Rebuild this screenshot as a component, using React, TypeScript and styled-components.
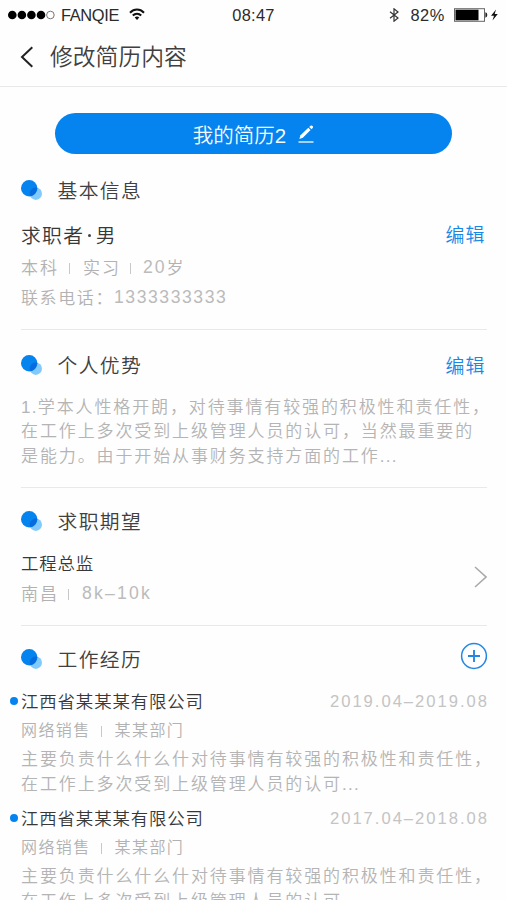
import React from 'react';
import styled, { createGlobalStyle } from 'styled-components';

const GlobalStyle = createGlobalStyle`
  * { box-sizing: border-box; }
  html, body { margin: 0; padding: 0; background: #fefefe; }
  body {
    height: 900px;
    overflow: hidden;
    font-family: "Liberation Sans", "Noto Sans CJK SC", sans-serif;
    font-weight: 350;
  }
`;

const Screen = styled.div`
  width: 507px;
  height: 900px;
  overflow: hidden;
  background: #fefefe;
`;

const StatusBar = styled.header`
  display: grid;
  grid-template-columns: 1fr auto 1fr;
  align-items: center;
  height: 30px;
  padding: 0 8px 0 8px;
  font-size: 16.4px;
  color: #2b2b2b;
`;

const StatusGroup = styled.div<{ $end?: boolean }>`
  display: flex;
  align-items: center;
  justify-content: ${(p) => (p.$end ? 'flex-end' : 'flex-start')};
`;

const Clock = styled.span`
  letter-spacing: 0.3px;
`;

const Percent = styled.span`
  letter-spacing: 0.6px;
`;

const SignalDots = styled.svg`
  width: 47px;
  height: 10px;
  margin-right: 6px;
`;

const Carrier = styled.span`
  letter-spacing: -0.35px;
`;

const Wifi = styled.svg`
  width: 16px;
  height: 13px;
  margin: 0 0 1px 10px;
`;

const Bluetooth = styled.svg`
  width: 10px;
  height: 14px;
  margin-right: 11px;
`;

const Battery = styled.svg`
  width: 45px;
  height: 14px;
  margin-left: 9px;
`;

const NavBar = styled.nav`
  display: flex;
  align-items: center;
  height: 57px;
  padding: 0 0 2px 20px;
  border-bottom: 1px solid #e9e9e9;
`;

const BackIcon = styled.svg`
  width: 14px;
  height: 22px;
  margin: 0 16px 0 0;
`;

const NavTitle = styled.h1`
  margin: 0;
  font-size: 22.8px;
  line-height: 32px;
  font-weight: 350;
  color: #404040;
`;

const ResumeButton = styled.button`
  display: flex;
  align-items: center;
  justify-content: center;
  width: 397px;
  height: 41px;
  margin: 26px 0 0 55px;
  padding: 0;
  border: 0;
  border-radius: 21px;
  background: #0583ee;
  color: #f4faff;
  font: inherit;
  font-size: 20.5px;
`;

const PenIcon = styled.svg`
  width: 16px;
  height: 18px;
  margin-left: 12px;
`;

const Section = styled.section<{ $top: number; $bottom: number }>`
  margin: 0 20px 0 21px;
  padding: ${(p) => p.$top}px 0 ${(p) => p.$bottom}px;
  border-bottom: 1px solid #e9e9e9;
`;

const SectionHead = styled.div`
  display: flex;
  align-items: center;
  height: 40px;
`;

const Mark = styled.svg`
  width: 21px;
  height: 20px;
  margin: 0 15.5px 2px 0;
`;

const SectionTitle = styled.h2`
  flex: 1;
  margin: 0;
  font-size: 19.8px;
  line-height: 28px;
  font-weight: 350;
  letter-spacing: 1.4px;
  color: #404040;
`;

const EditLink = styled.a`
  margin: 2px 1.8px 0 0;
  font-size: 18.9px;
  line-height: 28px;
  letter-spacing: 0.9px;
  color: #1987e6;
`;

const Row = styled.div<{ $height: number; $gap?: number }>`
  display: flex;
  align-items: center;
  justify-content: space-between;
  height: ${(p) => p.$height}px;
  margin-top: ${(p) => p.$gap ?? 0}px;
`;

const Name = styled.span<{ $size: number; $track: number }>`
  padding-bottom: 2px;
  font-size: ${(p) => p.$size}px;
  letter-spacing: ${(p) => p.$track}px;
  color: #383838;
`;

const Dot = styled.span`
  display: inline-block;
  width: 3px;
  height: 3px;
  margin: 0 5px 6px 3.5px;
  border-radius: 50%;
  background: #444;
`;

const Meta = styled.div<{ $size: number; $track: number }>`
  display: flex;
  align-items: center;
  padding-bottom: 2px;
  font-size: ${(p) => p.$size}px;
  letter-spacing: ${(p) => p.$track}px;
  color: #b2b2b2;
`;

const Digits = styled.span<{ $track: number }>`
  margin-top: 2px;
  font-size: 17.6px;
  letter-spacing: ${(p) => p.$track}px;
  color: #bbb;
`;

const Bar = styled.i<{ $before: number; $after: number }>`
  width: 1px;
  height: 11px;
  margin: 4px ${(p) => p.$after}px 0 ${(p) => p.$before}px;
  background: #c8c8c8;
`;

const Paragraph = styled.p<{ $gap: number }>`
  margin: ${(p) => p.$gap}px -10px 0 0;
  font-size: 17px;
  line-height: 24.4px;
  letter-spacing: 1.88px;
  white-space: nowrap;
  color: #b4b4b4;
`;

const Tight = styled.span`
  letter-spacing: 1.3px;
`;

const ChevronSpot = styled.div`
  display: flex;
  align-items: center;
  justify-content: space-between;
`;

const Chevron = styled.svg`
  width: 14px;
  height: 24px;
  margin-top: 3px;
`;

const AddIcon = styled.svg`
  width: 28px;
  height: 28px;
  margin: 0 -1px 8px 0;
`;

const Job = styled.article`
  display: flow-root;
  height: 117.2px;
`;

const Bullet = styled.i`
  flex: none;
  width: 8px;
  height: 8px;
  margin: 0 3px 0 -11px;
  border-radius: 50%;
  background: #0583ee;
`;

const Company = styled(Name)`
  flex: 1;
`;

const Period = styled.span`
  margin: 1px -2px 0 0;
  font-size: 16.6px;
  letter-spacing: 1.99px;
  color: #c4c4c4;
`;

function Heading({ title, children }: { title: string; children?: React.ReactNode }) {
  return (
    <SectionHead>
      <Mark viewBox="0 0 21 20">
        <circle cx="14.8" cy="13.7" r="6.2" fill="#82cafb" />
        <circle cx="8.2" cy="8.2" r="8.2" fill="#0583ee" />
        <path d="M8.7 12.7A6.2 6.2 0 0 1 15.9 7.6A8.2 8.2 0 0 1 9.8 16.3A6.2 6.2 0 0 1 8.7 12.7Z" fill="#056bdf" />
      </Mark>
      <SectionTitle>{title}</SectionTitle>
      {children}
    </SectionHead>
  );
}

const jobs = ['2019.04–2019.08', '2017.04–2018.08'];

export default function App() {
  return (
    <Screen>
      <GlobalStyle />
      <StatusBar>
        <StatusGroup>
          <SignalDots viewBox="0 0 47 10">
            {[4.3, 13.9, 23.4, 33].map((x) => (
              <circle key={x} cx={x} cy="5" r="4.3" fill="#000" />
            ))}
            <circle cx="42.4" cy="5" r="3.8" fill="none" stroke="#666" strokeWidth="0.9" />
          </SignalDots>
          <Carrier>FANQIE</Carrier>
          <Wifi viewBox="0 0 16 13" fill="none" stroke="#111" strokeWidth="2">
            <path d="M1 4.7C5 .5 11 .5 15 4.7" />
            <path d="M3.8 7.5C6.2 5 9.8 5 12.2 7.5" />
            <path d="M5.7 9.4Q8 7.5 10.3 9.4L8 12Z" fill="#111" stroke="none" />
          </Wifi>
        </StatusGroup>
        <Clock>08:47</Clock>
        <StatusGroup $end>
          <Bluetooth viewBox="0 0 10 14" fill="none" stroke="#333" strokeWidth="1.2">
            <path d="M1 3.8L9 10L5 13.2V.8L9 4L1 10.2" />
          </Bluetooth>
          <Percent>82%</Percent>
          <Battery viewBox="0 0 45 14">
            <rect x="0.5" y="0.7" width="30" height="12.6" fill="#fff" stroke="#666" />
            <rect x="1.5" y="1.7" width="23" height="10.6" fill="#000" />
            <path d="M31.4 4.3Q33.3 4.6 33.3 7T31.4 9.7Z" fill="#222" />
            <path d="M42 1.5L37 7.8H40L38.5 12.5L43.8 6H40.7Z" fill="#111" />
          </Battery>
        </StatusGroup>
      </StatusBar>
      <NavBar>
        <BackIcon viewBox="0 0 14 22">
          <path d="M12.3 1.3L2 11L12.3 20.7" fill="none" stroke="#222" strokeWidth="2" />
        </BackIcon>
        <NavTitle>修改简历内容</NavTitle>
      </NavBar>
      <ResumeButton>
        我的简历2
        <PenIcon viewBox="0 0 16 18">
          <path d="M0.5 17H15.5" stroke="#d8edff" strokeWidth="1.5" />
          <path d="M1.3 14L2.5 10.3L10.3 2.8L12.6 5.1L4.8 12.7Z" fill="#fff" />
          <path d="M11.2 1.9L12.5.7Q13.7 0 14.6 .9T14.7 3L13.5 4.2Z" fill="#fff" />
        </PenIcon>
      </ResumeButton>

      <Section $top={17} $bottom={18}>
        <Heading title="基本信息" />
        <Row $height={32} $gap={8}>
          <Name $size={19.8} $track={1.3}>求职者<Dot />男</Name>
          <EditLink>编辑</EditLink>
        </Row>
        <Row $height={32}>
          <Meta $size={17} $track={2}>
            本科<Bar $before={10} $after={13} />实习<Bar $before={9} $after={12} />
            <Digits $track={2}>20</Digits>岁
          </Meta>
        </Row>
        <Row $height={28}>
          <Meta $size={17} $track={1.6}>
            联系电话：<Digits $track={1.55}>1333333333</Digits>
          </Meta>
        </Row>
      </Section>

      <Section $top={16} $bottom={18}>
        <Heading title="个人优势">
          <EditLink>编辑</EditLink>
        </Heading>
        <Paragraph $gap={10}>
          <Tight>1.</Tight>学本人性格开朗，对待事情有较强的积极性和责任性，<br />
          在工作上多次受到上级管理人员的认可，当然最重要的<br />
          是能力。由于开始从事财务支持方面的工作<Tight>...</Tight>
        </Paragraph>
      </Section>

      <Section $top={14} $bottom={17}>
        <Heading title="求职期望" />
        <ChevronSpot>
          <div>
            <Row $height={29} $gap={7}>
              <Name $size={17.4} $track={0.9}>工程总监</Name>
            </Row>
            <Row $height={30}>
              <Meta $size={17} $track={2}>
                南昌<Bar $before={9} $after={13} />
                <Digits $track={2.2}>8k–10k</Digits>
              </Meta>
            </Row>
          </div>
          <Chevron viewBox="0 0 14 24">
            <path d="M2 2L13 12L2 22" fill="none" stroke="#aaa" strokeWidth="1.6" />
          </Chevron>
        </ChevronSpot>
      </Section>

      <Section $top={14} $bottom={0}>
        <Heading title="工作经历">
          <AddIcon viewBox="0 0 28 28" fill="none" stroke="#2388e4">
            <circle cx="14" cy="14" r="12.4" strokeWidth="1.5" />
            <path d="M8 14H20M14 8V20" strokeWidth="1.9" />
          </AddIcon>
        </Heading>
        {jobs.map((period) => (
          <Job key={period}>
            <Row $height={32} $gap={5}>
              <Bullet />
              <Company $size={17.4} $track={0.9}>江西省某某某有限公司</Company>
              <Period>{period}</Period>
            </Row>
            <Row $height={26}>
              <Meta $size={16} $track={1.4}>
                网络销售<Bar $before={10} $after={13} />某某部门
              </Meta>
            </Row>
            <Paragraph $gap={5}>
              主要负责什么什么什对待事情有较强的积极性和责任性，<br />
              在工作上多次受到上级管理人员的认可<Tight>...</Tight>
            </Paragraph>
          </Job>
        ))}
      </Section>
    </Screen>
  );
}
